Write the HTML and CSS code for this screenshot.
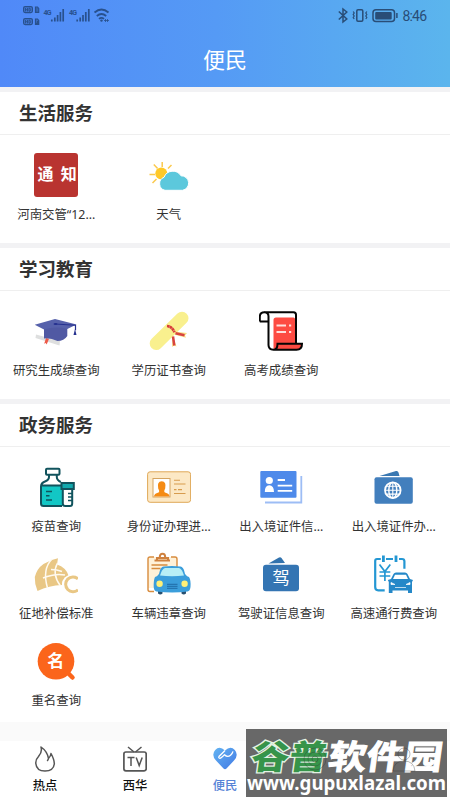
FILE: index.html
```html
<!DOCTYPE html>
<html lang="zh-CN">
<head>
<meta charset="utf-8">
<title>便民</title>
<link rel="stylesheet" href="styles.css">
</head>
<body>
<div class="app">
  <header class="header">
    <div class="status">
      <svg class="status-left" width="90" height="24" viewBox="22 4 90 24">
        <g fill="none" stroke="currentColor" stroke-width="1.2">
          <rect x="23.6" y="6.6" width="8.8" height="6" rx="1.5" fill="currentColor" fill-opacity=".35"/><rect x="23.6" y="18.6" width="8.8" height="6" rx="1.5" fill="currentColor" fill-opacity=".35"/>
          <path d="M25.5 8v3.4M27.5 8v3.4M25.5 9.700h2M29 8.200v3h1q1.300-1.500 0-3zM25.500 20v3.400M27.500 20v3.400M25.500 21.700h2M29 20.200v3h1q1.300-1.500 0-3z" stroke-width=".9"/>
          <path d="M35.500 7.200h2l1.200 1.200v4h-3.200zM37 8v4M35.500 19.200h2l1.200 1.200v4h-3.200zM36 21h2l-1.500 2.500h2"/>
        </g>
        <text class="net" x="43.500" y="14.700" textLength="8">4G</text><text class="net" x="69" y="14.700" textLength="8">4G</text>
        <path d="M51.800 21.500v-2M54.800 21.500v-4M57.600 21.500v-6.500M60.400 21.500v-9.500M63.200 21.500v-12.500M77.200 21.500v-2M80.200 21.500v-4M83 21.500v-6.500M85.800 21.500v-9.500M88.800 21.500v-12.500" stroke="currentColor" stroke-width="1.700"/>
        <path d="M94.500 12.500q7-6 14 0M96.800 16q4.700-4 9.400 0M99 18.900q2.500-2 5 0" fill="none" stroke="currentColor" stroke-width="1.800"/>
        <circle cx="101.500" cy="20.600" r="1.200" fill="currentColor"/><path d="M104 20.500h5M105.500 19v3M107.500 19v3" stroke="currentColor" stroke-width=".8"/>
      </svg>
      <svg class="status-right" width="94" height="20" viewBox="336 5 94 20">
        <g fill="none" stroke="currentColor" stroke-width="1.500">
          <path d="M338.800 11.500l8 7.500-3.800 3V9l3.800 3-8 7.500"/>
          <rect x="356.800" y="9.800" width="6" height="11.500" rx="1.200"/>
          <path d="M353.200 11.500l1 1.500-1 1.500 1 1.500-1 1.500 1 1.500M366.800 11.500l-1 1.500 1 1.500-1 1.500 1 1.500-1 1.500" stroke-width="1.200"/>
          <rect x="373" y="9.800" width="21.500" height="11.800" rx="3"/>
          <path d="M396.900 13v5"/>
        </g>
        <rect x="375.200" y="12" width="16.500" height="7.500" rx="1" fill="currentColor"/>
        <text class="clock" x="402.500" y="21" textLength="24.500">8:46</text>
      </svg>
    </div>
    <h1 class="page-title">便民</h1>
  </header>

  <main class="content">
    <section class="panel panel-life">
      <h2 class="panel-title">生活服务</h2>
      <div class="grid">
        <div class="cell">
          <svg class="icon" viewBox="0 0 44 44"><rect width="44" height="44" rx="3" fill="#b93430"/><text class="seal" x="3.500" y="27.300">通</text><text class="seal" x="26.800" y="27.300">知</text></svg>
          <span class="label">河南交管“12…</span>
        </div>
        <div class="cell">
          <svg class="icon" viewBox="0 0 44 44"><circle cx="14.300" cy="20.500" r="6" fill="#ffc928"/><path d="M15.200 9v5M6.800 11.500l3.800 4M2.500 21.500h5.500M5.500 30l4-4M21 15.500l3.500-3.500" stroke="#fbc94d" stroke-width="1.500"/><path d="M18 37.300a6.800 6.800 0 0 1-1-13A9.500 9.500 0 0 1 34 22.800A7.300 7.300 0 0 1 35.500 37.300z" fill="#5cc8dc" stroke="#fff" stroke-width="1"/></svg>
          <span class="label">天气</span>
        </div>
      </div>
    </section>

    <section class="panel panel-study">
      <h2 class="panel-title">学习教育</h2>
      <div class="grid">
        <div class="cell">
          <svg class="icon" viewBox="0 0 44 44"><path d="M2 25.500l24 6.500-.5 4.500L1.500 29z" fill="#dedfdf"/><path d="M12 29l3 .8-2.300 5.700-1-1.500-1.500.8z" fill="#ed5a49"/><path d="M10 18.500q11-5 23.300 0v8.500q-3.300 5-9.800 5-7.500-3.500-13.500-2.500z" fill="#5059a3"/><path d="M.7 15.800L21 10l21.500 5.500L33.300 20q-12-3-23.300.5z" fill="#5661ab"/><path d="M21 15l20.500 1.200v5" fill="none" stroke="#26318f" stroke-width="1.200"/><path d="M41 20l1.500 6h-3z" fill="#26318f"/><ellipse cx="21.500" cy="15" rx="2" ry="1" fill="#26318f"/></svg>
          <span class="label">研究生成绩查询</span>
        </div>
        <div class="cell">
          <svg class="icon" viewBox="0 0 44 44"><path d="M9.200 34.500L35 9.200" stroke="#f9f08e" stroke-width="13" stroke-linecap="round"/><path d="M27.500 22.500l12.500 1.500-2 2.500 1 2.200-11-3zM25.500 26l4 11.500-2.500-1-2 1.500z" fill="#f8df83"/><path d="M20 17q5 .5 7.500 6.300" fill="none" stroke="#d83b3b" stroke-width="2.700" stroke-dasharray="2.600 .3"/><path d="M28.500 24.200l9 2M26 27.500l1.300 9" stroke="#d84340" stroke-width="2.500"/></svg>
          <span class="label">学历证书查询</span>
        </div>
        <div class="cell">
          <svg class="icon" viewBox="0 0 44 44"><path d="M14.500 11q0-2.500 2.500-2.500h17.500q1.500 0 1.500 1.500v24H19l-2 6h-2.500z" fill="#fd4b42"/><path d="M18.500 34.500h24.500q0 6-5.500 6H15.500q2.500-1 3-6z" fill="#fd4b42"/><path d="M.8 12.500h8.500M.8 12.500V8q0-4.700 4.500-4.700T9.500 8v28q0 4.700 5 4.700h23q5.500 0 5.500-6H18.500q0 6-4 6M5.500 3.300h29q2.500 0 2.500 2.500v29" fill="none" stroke="#050505" stroke-width="2"/><path d="M17.500 16.500h9.500M17.500 23h9.500M30 16.500h2.200M30 23h2.200" stroke="#ffe0dc" stroke-width="2.200"/></svg>
          <span class="label">高考成绩查询</span>
        </div>
      </div>
    </section>

    <section class="panel panel-gov">
      <h2 class="panel-title">政务服务</h2>
      <div class="grid">
        <div class="cell">
          <svg class="icon" viewBox="0 0 44 44"><path d="M7 20.500h22V41H9q-2 0-2-2z" fill="#12c7c5"/><g fill="none" stroke="#11535d" stroke-width="2"><rect x="12" y="3.700" width="13.500" height="6" rx="1"/><path d="M15 10v2q0 3-4 4.500-4 1.500-4 5V38.500q0 2.500 2.500 2.500H28M22.800 10v2q0 3 4 5M7 20.500h21"/><path d="M28.800 24v14.500q0 2.500 2.500 2.500H36q2.200 0 2.200-2.500V24" fill="#fff"/><rect x="27.500" y="18" width="12.300" height="6" fill="#12a9ad"/></g><path d="M12 26.500h6M12 30.800h3.500M12 35h6M34 28.500h4M34 32h4M34 35.500h4" stroke="#11535d" stroke-width="1.600"/></svg>
          <span class="label">疫苗查询</span>
        </div>
        <div class="cell">
          <svg class="icon" viewBox="0 0 44 44"><rect x=".6" y="6.800" width="43" height="30.500" rx="2.500" fill="#fce8c5" stroke="#dfa858" stroke-width="1"/><rect x="6" y="13.500" width="17" height="18.500" fill="#fff" stroke="#d5a460" stroke-width="1"/><path d="M7 31.500q0-3 4.500-4 1.500-1-.3-4-1.500-7 3.500-7.300 5 .3 3.500 7.300-1.800 3-.2 4 4.500 1 4.500 4z" fill="#f58b14"/><path d="M27 15.300h6M27 19h11.500M27 24.600h2.500M31 24.600h4M27 28.500h11.500" stroke="#d79b4d" stroke-width="1.100"/></svg>
          <span class="label">身份证办理进…</span>
        </div>
        <div class="cell">
          <svg class="icon" viewBox="0 0 44 44"><path d="M42.300 11v26.500H6" fill="none" stroke="#9dbdf5" stroke-width="1.800"/><rect x="1.300" y="6" width="36.200" height="26.800" rx="1" fill="#4e8aea"/><circle cx="10.300" cy="15.500" r="3.600" fill="#fff"/><path d="M5.800 27q0-6.700 4.500-6.700t4.700 6.700z" fill="#fff"/><path d="M18.700 15H26M18.700 20.600h14.500M18.700 25.900h14.500" stroke="#fff" stroke-width="1.900"/></svg>
          <span class="label">出入境证件信…</span>
        </div>
        <div class="cell">
          <svg class="icon" viewBox="0 0 44 44"><path d="M7.500 11L24 6q2-.5 2.500 1.500l1 3.500z" fill="#3a78b2"/><rect x="2.500" y="12.300" width="38.300" height="26.400" rx="2" fill="#427fbd"/><g fill="none" stroke="#fff" stroke-width="1.400"><circle cx="20.800" cy="25.200" r="7.800" stroke-width="1.800"/><ellipse cx="20.800" cy="25.200" rx="4" ry="7.800"/><path d="M20.800 17.500V33M13 25.200h15.600M14.500 21.300h12.600M14.500 29.100h12.600" stroke-width="1.100"/></g></svg>
          <span class="label">出入境证件办…</span>
        </div>
        <div class="cell">
          <svg class="icon" viewBox="0 0 44 44"><path d="M3.500 39Q.5 32 .8 25 3 16.500 9.500 12 17 7.500 24 6.300l-1 6.200q9 3 11.500 11-6 3-6.500 9.500Q15 33.500 3.500 39z" fill="#e9c785"/><path d="M18 7Q8 17 13.500 36M23.500 11q-6 11 3 23M9 26q12-5 22-3M17 17.500q6 0 11 2" fill="none" stroke="#fffaf0" stroke-width="1.500"/><circle cx="37.500" cy="32.300" r="9.500" fill="#fff"/><path d="M44 26.800a7.400 7.400 0 1 0 0 11" fill="none" stroke="#e9c785" stroke-width="3"/></svg>
          <span class="label">征地补偿标准</span>
        </div>
        <div class="cell">
          <svg class="icon" viewBox="0 0 44 44"><path d="M3 5h25q2 0 2 2v29H1V7q0-2 2-2z" fill="#fff1d8"/><path d="M7 5H3Q1 5 1 7v30.500q0 2 2 2h4M24 5h4q2 0 2 2v8" fill="none" stroke="#d88c3e" stroke-width="1.400"/><path d="M7.500 8.500h15.500M10 7.500V6h11v1.500M12.800 5q0-3.300 2.700-3.300T18.200 5" fill="none" stroke="#cf813e" stroke-width="2"/><path d="M4.500 13h16M4.500 16.500h9" stroke="#d88c3e" stroke-width="1.300"/><path d="M11 38h4.500v3.500q-2.200 2-4.500 0zM34.500 38H39v3.500q-2.300 2-4.500 0z" fill="#285070"/><path d="M8 25q4-1.500 4.500-5 1-5 4-5.500 8.500-1 17 0 3 .5 4 5.500.5 3.500 4.500 5 2 3 1.500 10-.5 4-3 4.500-15 2-31 0-2.500-.5-2.800-4.500Q6.500 28 8 25z" fill="#3b9edb"/><path d="M13 23.500q2-7 5-7.500h14q3 .5 5 7.500-12 1.500-24 0z" fill="#b8eff6"/><circle cx="12.600" cy="31.700" r="3.200" fill="#fff078"/><circle cx="37.600" cy="31.700" r="3.200" fill="#fff078"/><path d="M20 32.300h10.500M20 34.300h10.500M20 36.300h10.500" stroke="#1d64a0" stroke-width=".9"/></svg>
          <span class="label">车辆违章查询</span>
        </div>
        <div class="cell">
          <svg class="icon" viewBox="0 0 44 44"><path d="M9.500 11.500L20 5.500q1.500-.7 2.500.5l3.500 5z" fill="#3172ad"/><rect x="4" y="12.700" width="36" height="26.600" rx="3" fill="#3475b3"/><text class="drive" x="22" y="32.300">驾</text></svg>
          <span class="label">驾驶证信息查询</span>
        </div>
        <div class="cell">
          <svg class="icon" viewBox="0 0 44 44"><g fill="none" stroke="#2497d3" stroke-width="2.200"><path d="M8.800 7H5Q3.200 7 3.200 9v26q0 3.300 3 3.300h6.500M14 7h7M27 7h3q2.400 0 2.400 2.300v7.500"/><path d="M11.400 3.500v6.500M24 3.500v6.500" stroke-width="2.800"/><path d="M7.500 12.500l5.400 7 5.400-7M12.900 19.500v9.500M7.500 20h10.800M7.500 24h10.800" stroke-width="1.700"/></g><path d="M15.800 28l3.200-1 2.500-5q.8-1.500 2.500-1.500h9q1.700 0 2.500 1.500l2.500 5 3 1-1 2v11h-4v-2.500H20.500V41h-3.700V30z" fill="#2588c8"/><path d="M21 27l2-4.300h11l2 4.300z" fill="#fff"/><path d="M19 30.500l4 2h-4zM38 30.500L34 32.500h4zM23 35.500h11" fill="#fff" stroke="#fff" stroke-width=".7"/></svg>
          <span class="label">高速通行费查询</span>
        </div>
        <div class="cell">
          <svg class="icon" viewBox="0 0 44 44"><path d="M33 33l5.500 5.500" stroke="#fb651b" stroke-width="4.500" stroke-linecap="round"/><circle cx="22" cy="22.300" r="18.300" fill="#fb651b"/><text class="name" x="21.800" y="28.300">名</text></svg>
          <span class="label">重名查询</span>
        </div>
      </div>
    </section>
  </main>

  <nav class="tabs">
    <div class="tab"><svg class="tab-icon" viewBox="0 0 24 26"><path d="M8 1q1.500 5-2.500 9.500-3 3-2.700 7 .7 7.500 9.200 7.500t9.300-7q.2-4-3.300-10.500-.3 3-2.500 4.800Q14 5 8 1zM15.500 12.300q-.3 1.500-1.300 2.700" fill="none" stroke="#555" stroke-width="1.500" stroke-linejoin="round"/></svg><span>热点</span></div>
    <div class="tab"><svg class="tab-icon" viewBox="0 0 24 26"><rect x=".9" y="6" width="22.300" height="18.800" rx="2" fill="none" stroke="#555" stroke-width="1.700"/><path d="M5 1l6 5M18.500 1l-6 5M4.500 11.500h7M8 11.500v8.500M13.200 11.500l3 8 3-8" fill="none" stroke="#555" stroke-width="1.500"/></svg><span>西华</span></div>
    <div class="tab tab-active"><svg class="tab-icon" viewBox="0 0 24 26"><defs><linearGradient id="heart" x2="1" y2="1"><stop stop-color="#63b4f2"/><stop offset="1" stop-color="#4279e4"/></linearGradient></defs><path d="M12 4.500Q6.500-.5 2.200 4-2 9 3 14.500l7.500 8q1.500 1.500 3 0l7.500-8Q26 9 21.800 4 17.500-.5 12 4.500z" fill="url(#heart)"/><path d="M12 4.500L6 10.500q-.8 1.500 1 1.800 1 0 4.500-3.500 3 3 6 .5 2-2 2.500-4" fill="none" stroke="#fff" stroke-width="1.300"/></svg><span>便民</span></div>
    <div class="tab"></div>
    <div class="tab"></div>
  </nav>

  <svg class="watermark" width="201" height="68" viewBox="246 729 201 68">
    <rect x="246" y="729" width="201" height="68" fill="#686868"/>
    <g transform="translate(250 768.500) skewX(-8) scale(1 .88)">
      <text class="brand brand-green" x="0" y="0" textLength="76">谷普</text>
      <text class="brand" x="77" y="0" textLength="114">软件园</text>
    </g>
    <g class="ghost">
      <circle cx="315" cy="759" r="11"/><circle cx="315" cy="759" r="7"/><circle cx="315" cy="759" r="3"/>
      <circle cx="404" cy="754" r="6"/><path d="M393 771q1-10 11-10t11 10z"/>
    </g>
    <text class="url" x="247" y="789.500" textLength="199" lengthAdjust="spacingAndGlyphs">www.gupuxlazal.com</text>
  </svg>
</div>
</body>
</html>
```
FILE: styles.css
```css
* { box-sizing: border-box; }

body {
  margin: 0;
  background: #fff;
  color: #333;
  font-family: Roboto, "Noto Sans CJK SC", sans-serif;
}

.app {
  position: relative;
  display: flex;
  flex-direction: column;
  width: 450px;
  height: 800px;
  overflow: hidden;
}

.header {
  height: 87px;
  background: linear-gradient(90deg, #5089f8, #559af5 48%, #5bb5ed);
}

.status {
  display: flex;
  justify-content: space-between;
  height: 44px;
  padding: 4px 20px 0 22px;
  color: #28518e;
}

.status-right { margin-top: 1px; color: #294d77; }
.net { font: bold 7px Roboto, sans-serif; fill: currentColor; }
.clock { font: 14px Roboto, sans-serif; fill: currentColor; }

.page-title {
  margin: 0;
  color: #fff;
  font-size: 22px;
  font-weight: 400;
  line-height: 34px;
  text-align: center;
}

.content {
  display: flex;
  flex-direction: column;
  gap: 5px;
  height: 654px;
  padding-top: 5px;
  background: linear-gradient(#f2f2f4 600px, #fafafa 600px);
}

.panel { background: #fff; }
.panel-life { height: 151px; }
.panel-study { height: 151px; }
.panel-gov { height: 318px; }

.panel-title {
  height: 43px;
  margin: 0;
  padding-left: 19px;
  border-bottom: 1px solid #efefef;
  font-size: 18.5px;
  font-weight: 700;
  line-height: 44px;
}

.grid {
  display: grid;
  grid-template-columns: repeat(4, 112.5px);
  grid-auto-rows: 87px;
  padding-top: 18px;
}

.cell {
  display: flex;
  flex-direction: column;
  align-items: center;
}

.icon { width: 44px; height: 44px; flex: none; }

.label {
  margin-top: 7px;
  font-family: "Noto Sans", "Noto Sans CJK SC", sans-serif;
  font-size: 12.4px;
  line-height: 21px;
  white-space: nowrap;
}

.seal, .drive, .name {
  fill: #fff;
  font-family: "Noto Sans CJK SC", sans-serif;
  font-size: 16px;
}

.seal { font-weight: 700; }
.drive { font-size: 17.5px; text-anchor: middle; }
.name { font-weight: 700; font-size: 17px; text-anchor: middle; }

.tabs {
  display: flex;
  height: 59px;
  padding-top: 5px;
  background: #fff;
}

.tab {
  display: flex;
  flex: 1;
  flex-direction: column;
  align-items: center;
  color: #111;
  font-size: 12.3px;
  font-weight: 500;
  line-height: 18px;
}

.tab-icon { width: 24px; height: 26px; margin-bottom: 5px; }
.tab-active { color: #5683d6; }

.watermark {
  position: absolute;
  left: 246px;
  top: 729px;
}

.brand {
  fill: #fff;
  stroke: #fff;
  stroke-width: 1.2px;
  font: 700 38px "Noto Sans CJK SC", sans-serif;
}

.brand-green {
  fill: #36944a;
  stroke: #e4f3e4;
  stroke-width: 3px;
  paint-order: stroke;
  font-weight: 900;
}

.ghost {
  fill: none;
  stroke: #333;
  stroke-opacity: .35;
}

.url {
  fill: #fff;
  font: bold 20px "Noto Sans", sans-serif;
}
```
